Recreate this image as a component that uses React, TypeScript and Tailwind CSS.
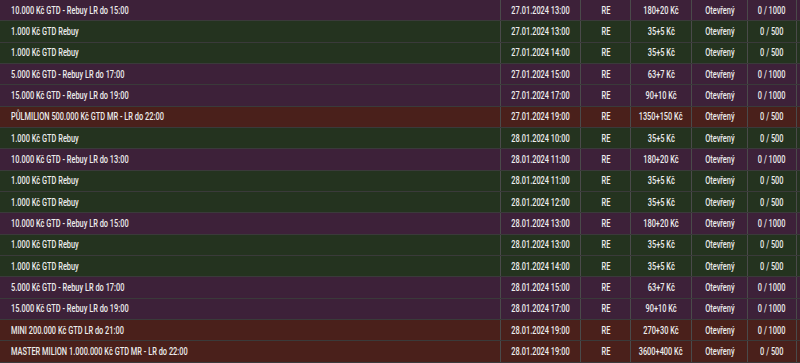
import React from 'react';

type Kind = 'p' | 'g' | 'r';

const rows: [string, string, string, string, Kind][] = [
  ['10.000 Kč GTD - Rebuy LR do 15:00', '27.01.2024 13:00', '180+20 Kč', '0 / 1000', 'p'],
  ['1.000 Kč GTD Rebuy', '27.01.2024 13:00', '35+5 Kč', '0 / 500', 'g'],
  ['1.000 Kč GTD Rebuy', '27.01.2024 14:00', '35+5 Kč', '0 / 500', 'g'],
  ['5.000 Kč GTD - Rebuy LR do 17:00', '27.01.2024 15:00', '63+7 Kč', '0 / 1000', 'p'],
  ['15.000 Kč GTD - Rebuy LR do 19:00', '27.01.2024 17:00', '90+10 Kč', '0 / 1000', 'p'],
  ['PŮLMILION 500.000 Kč GTD MR - LR do 22:00', '27.01.2024 19:00', '1350+150 Kč', '0 / 500', 'r'],
  ['1.000 Kč GTD Rebuy', '28.01.2024 10:00', '35+5 Kč', '0 / 500', 'g'],
  ['10.000 Kč GTD - Rebuy LR do 13:00', '28.01.2024 11:00', '180+20 Kč', '0 / 1000', 'p'],
  ['1.000 Kč GTD Rebuy', '28.01.2024 11:00', '35+5 Kč', '0 / 500', 'g'],
  ['1.000 Kč GTD Rebuy', '28.01.2024 12:00', '35+5 Kč', '0 / 500', 'g'],
  ['10.000 Kč GTD - Rebuy LR do 15:00', '28.01.2024 13:00', '180+20 Kč', '0 / 1000', 'p'],
  ['1.000 Kč GTD Rebuy', '28.01.2024 13:00', '35+5 Kč', '0 / 500', 'g'],
  ['1.000 Kč GTD Rebuy', '28.01.2024 14:00', '35+5 Kč', '0 / 500', 'g'],
  ['5.000 Kč GTD - Rebuy LR do 17:00', '28.01.2024 15:00', '63+7 Kč', '0 / 1000', 'p'],
  ['15.000 Kč GTD - Rebuy LR do 19:00', '28.01.2024 17:00', '90+10 Kč', '0 / 1000', 'p'],
  ['MINI 200.000 Kč GTD LR do 21:00', '28.01.2024 19:00', '270+30 Kč', '0 / 1000', 'r'],
  ['MASTER MILION 1.000.000 Kč GTD MR - LR do 22:00', '28.01.2024 19:00', '3600+400 Kč', '0 / 500', 'r'],
];

const bg: Record<Kind, string> = {
  p: 'bg-[#3d2139]',
  g: 'bg-[#24331f]',
  r: 'bg-[#4a201b]',
};

const grid = 'grid grid-cols-[501px_80px_50px_61px_56px_49px_1fr] h-[21.33px] border-b border-[#3a3a3a]';
const cell = 'flex items-center justify-center border-r border-[#4a4a4a] h-full whitespace-nowrap';
const squeeze = 'inline-block scale-x-[0.74]';

const App = () => {
  return (
    <div className="w-[800px] h-[363px] overflow-hidden bg-[#1e1e1e] text-[10px] font-medium text-[#ececec] font-['Roboto',sans-serif]">
      {rows.map(([name, date, price, players, kind], idx) => (
        <div key={idx} className={`${grid} ${bg[kind]}`}>
          <div className="flex items-center pl-[11px] border-r border-[#4a4a4a] h-full whitespace-nowrap">
            <span className={`${squeeze} origin-left`}>{name}</span>
          </div>
          <div className={cell}><span className={squeeze}>{date}</span></div>
          <div className={cell}><span className={squeeze}>RE</span></div>
          <div className={cell}><span className={squeeze}>{price}</span></div>
          <div className={cell}><span className={squeeze}>Otevřený</span></div>
          <div className={cell}><span className={squeeze}>{players}</span></div>
          <div className="h-full" />
        </div>
      ))}
      {/* next row peeking in at the bottom edge */}
      <div className={`${grid} bg-[#24331f]`}>
        <div className="border-r border-[#4a4a4a] h-full" />
        <div className="border-r border-[#4a4a4a] h-full" />
        <div className="border-r border-[#4a4a4a] h-full" />
        <div className="border-r border-[#4a4a4a] h-full" />
        <div className="border-r border-[#4a4a4a] h-full" />
        <div className="border-r border-[#4a4a4a] h-full" />
        <div className="h-full" />
      </div>
    </div>
  );
};

export default App;
